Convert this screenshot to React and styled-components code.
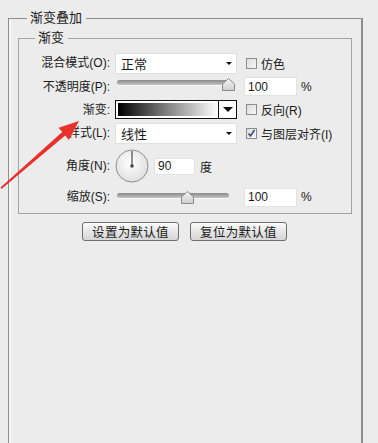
import React from "react";
import styled, { createGlobalStyle } from "styled-components";

const Global = createGlobalStyle`
  body {
    margin: 0;
    background: #ececec;
    font-family: "Liberation Sans", "Noto Sans CJK SC", sans-serif;
    font-size: 12px;
    color: #1a1a1a;
  }
`;

const Page = styled.div`
  position: relative;
  width: 378px;
  height: 443px;
  overflow: hidden;
  padding-top: 9px;
  box-sizing: border-box;
`;

const Outer = styled.fieldset`
  margin: 0 15px 0 8px;
  padding: 2px 9px 0 9px;
  border: 1px solid #8e8e8e;
  border-right: 2px solid #8e8e8e;
  border-bottom: none;
  box-shadow: inset 2px 0 0 #f6f6f6;
  min-height: 460px;
  min-inline-size: 0;
`;

const Legend = styled.legend`
  margin-left: ${(p) => p.$offset}px;
  padding: 0 4px 0 3px;
  font-size: 13px;
  line-height: 18px;
  color: #1a1a1a;
`;

const Inner = styled.fieldset`
  margin: 0;
  padding: 4px 0 6px 0;
  border: 1px solid #a4a4a4;
  min-inline-size: 0;
`;

const Grid = styled.div`
  display: grid;
  grid-template-columns: 92px 122px 1fr;
  grid-template-rows: 24px 23px 23px 24px 42px 20px;
  column-gap: 4px;
  align-items: center;
`;

const Label = styled.div`
  text-align: right;
  white-space: nowrap;
  padding-right: 1px;
  line-height: 16px;
`;

const Extra = styled.div`
  display: flex;
  align-items: center;
  gap: 4px;
  padding-left: 3px;
  white-space: nowrap;
`;

const Select = styled.div`
  height: 21px;
  background: #fff;
  border: 1px solid #e0e0e0;
  display: flex;
  align-items: center;
  justify-content: space-between;
  padding: 0 4px 0 5px;
  font-size: 13px;
  box-sizing: border-box;
`;

const Caret = styled.span`
  width: 0;
  height: 0;
  border-left: ${(p) => p.$size}px solid transparent;
  border-right: ${(p) => p.$size}px solid transparent;
  border-top: ${(p) => p.$size}px solid #111;
`;

const Gradient = styled.div`
  height: 19px;
  border: 1px solid #111;
  display: flex;
  background: #fff;
  box-sizing: border-box;
  box-shadow: inset 0 0 0 1px #fff;
`;

const Ramp = styled.div`
  flex: 1;
  margin: 2px 0 2px 2px;
  background: linear-gradient(to right, #000 0%, #777 45%, #fff 100%);
`;

const RampButton = styled.div`
  width: 17px;
  border-left: 1px solid #111;
  display: flex;
  align-items: center;
  justify-content: center;
`;

const SliderWrap = styled.div`
  position: relative;
  width: ${(p) => p.$width}px;
  height: 14px;
  margin: ${(p) => p.$top}px 0 0 2px;
  align-self: start;
`;

const Track = styled.div`
  height: 5px;
  margin-top: 1px;
  border-radius: 3px;
  background: linear-gradient(#8a8a8a, #c4c4c4);
  box-shadow: 0 1px 0 #f8f8f8;
`;

const Thumb = styled.svg`
  position: absolute;
  top: -1px;
  width: 13px;
  height: 13px;
`;

const Input = styled.div`
  width: ${(p) => p.$width}px;
  height: ${(p) => p.$height}px;
  background: #fff;
  border: 1px solid #e2e2e2;
  box-sizing: border-box;
  padding-left: 3px;
  display: flex;
  align-items: center;
  font-size: 12px;
`;

const Box = styled.span`
  width: 11px;
  height: 11px;
  border: 1px solid #8d8d8d;
  background: linear-gradient(135deg, #dcdcdc, #f6f6f6);
  box-sizing: border-box;
  display: flex;
  align-items: center;
  justify-content: center;
  margin-left: 2px;
`;

const Angle = styled.div`
  display: flex;
  align-items: center;
  gap: 5px;
`;

const Buttons = styled.div`
  display: flex;
  justify-content: center;
  gap: 11px;
  margin-top: 8px;
  padding-right: 1px;
`;

const Button = styled.div`
  width: 97px;
  height: 19px;
  border: 1px solid #6f6f6f;
  border-radius: 3px;
  background: linear-gradient(#fbfbfb, #e6e6e6 50%, #d6d6d6);
  box-sizing: border-box;
  display: flex;
  align-items: center;
  justify-content: center;
  font-size: 12.5px;
  letter-spacing: 0.3px;
`;

const Arrow = styled.svg`
  position: absolute;
  left: 0;
  top: 110px;
  width: 90px;
  height: 85px;
`;

const Check = ({ checked }) => (
  <Box>
    {checked && (
      <svg width="9" height="9" viewBox="0 0 9 9">
        <path d="M1.5 4.5 L3.5 7 L7.5 1" fill="none" stroke="#3d4f86" strokeWidth="1.6" />
      </svg>
    )}
  </Box>
);

const Slider = ({ width, top, value }) => (
  <SliderWrap $width={width} $top={top}>
    <Track />
    <Thumb viewBox="0 0 13 13" style={{ left: value * width - 6.5 }}>
      <defs>
        <linearGradient id="tg" x1="0" y1="0" x2="0" y2="1">
          <stop offset="0" stopColor="#f4f4f4" />
          <stop offset="1" stopColor="#cfcfcf" />
        </linearGradient>
      </defs>
      <path d="M6.5 0.5 L12.5 6 L12.5 12.5 L0.5 12.5 L0.5 6 Z" fill="url(#tg)" stroke="#8a8a8a" />
    </Thumb>
  </SliderWrap>
);

const Dial = () => (
  <svg width="34" height="34" viewBox="0 0 34 34">
    <defs>
      <radialGradient id="dg" cx="0.45" cy="0.4" r="0.7">
        <stop offset="0" stopColor="#ffffff" />
        <stop offset="1" stopColor="#d9d9d9" />
      </radialGradient>
    </defs>
    <circle cx="17" cy="17" r="16" fill="url(#dg)" stroke="#8f8f8f" />
    <line x1="17" y1="17" x2="17" y2="2" stroke="#555" strokeWidth="1.3" />
    <circle cx="17" cy="17" r="1.8" fill="#444" />
  </svg>
);

const App = () => {
  return (
    <Page>
      <Global />
      <Outer>
        <Legend $offset={9}>渐变叠加</Legend>
        <Inner>
          <Legend $offset={16}>渐变</Legend>
          <Grid>
            <Label>混合模式(O):</Label>
            <Select>
              正常
              <Caret $size={3.5} />
            </Select>
            <Extra>
              <Check />
              仿色
            </Extra>

            <Label>不透明度(P):</Label>
            <Slider width={115} top={4} value={0.97} />
            <Extra>
              <Input $width={53} $height={19}>100</Input>
              %
            </Extra>

            <Label>渐变:</Label>
            <Gradient>
              <Ramp />
              <RampButton>
                <Caret $size={5} />
              </RampButton>
            </Gradient>
            <Extra>
              <Check />
              反向(R)
            </Extra>

            <Label>样式(L):</Label>
            <Select>
              线性
              <Caret $size={3.5} />
            </Select>
            <Extra>
              <Check checked />
              与图层对齐(I)
            </Extra>

            <Label>角度(N):</Label>
            <Angle>
              <Dial />
              <Input $width={41} $height={17}>90</Input>
              度
            </Angle>
            <div />

            <Label>缩放(S):</Label>
            <Slider width={112} top={5} value={0.625} />
            <Extra>
              <Input $width={53} $height={19}>100</Input>
              %
            </Extra>
          </Grid>
        </Inner>
        <Buttons>
          <Button>设置为默认值</Button>
          <Button>复位为默认值</Button>
        </Buttons>
      </Outer>
      <Arrow viewBox="0 110 90 85">
        <path
          d="M79 121 L68.8 139.9 L65.2 135.6 L1.5 189 L0.5 187.5 L62.2 131.9 L58.6 127.7 Z"
          fill="#e8312a"
        />
      </Arrow>
    </Page>
  );
};

export default App;
